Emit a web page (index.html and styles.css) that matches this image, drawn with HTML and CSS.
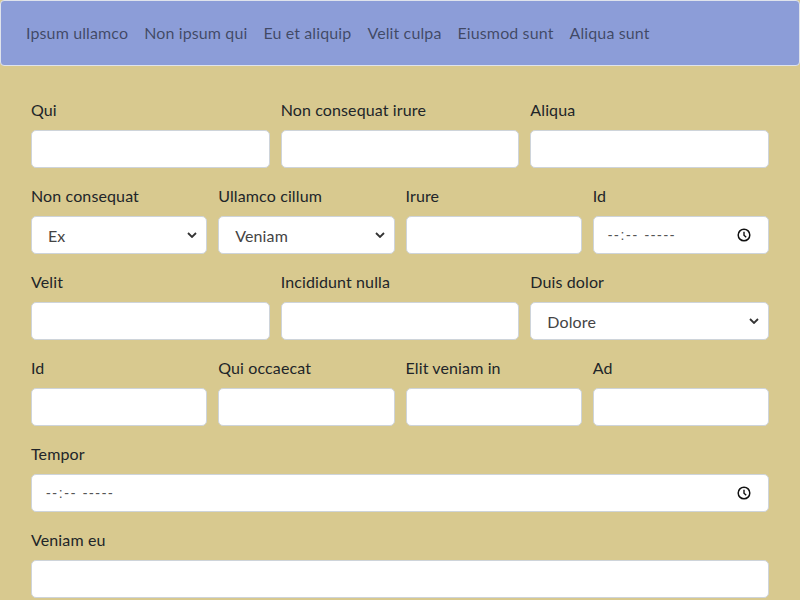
FILE: index.html
```html
<!DOCTYPE html>
<html>
<head>
<meta charset="utf-8">
<link rel="stylesheet" href="styles.css">
</head>
<body>
<nav class="navbar">
  <a class="nav-link" href="#">Ipsum ullamco</a>
  <a class="nav-link" href="#">Non ipsum qui</a>
  <a class="nav-link" href="#">Eu et aliquip</a>
  <a class="nav-link" href="#">Velit culpa</a>
  <a class="nav-link" href="#">Eiusmod sunt</a>
  <a class="nav-link" href="#">Aliqua sunt</a>
</nav>
<form class="form">
  <div class="row cols-3">
    <div class="field"><label>Qui</label><input class="control" type="text"></div>
    <div class="field"><label>Non consequat irure</label><input class="control" type="text"></div>
    <div class="field"><label>Aliqua</label><input class="control" type="text"></div>
  </div>
  <div class="row cols-4">
    <div class="field"><label>Non consequat</label>
      <div class="select-wrap"><select class="control select"><option>Ex</option></select>
      <svg class="chev" width="10" height="6" viewBox="0 0 10 6"><path d="M1 1l4 4 4-4" fill="none" stroke="#333" stroke-width="1.8"/></svg></div>
    </div>
    <div class="field"><label>Ullamco cillum</label>
      <div class="select-wrap"><select class="control select"><option>Veniam</option></select>
      <svg class="chev" width="10" height="6" viewBox="0 0 10 6"><path d="M1 1l4 4 4-4" fill="none" stroke="#333" stroke-width="1.8"/></svg></div>
    </div>
    <div class="field"><label>Irure</label><input class="control" type="text"></div>
    <div class="field"><label>Id</label>
      <div class="control time"><span class="time-text">--:-- -----</span>
      <svg class="clock" width="14" height="14" viewBox="0 0 14 14"><circle cx="7" cy="7" r="5.8" fill="none" stroke="#111" stroke-width="1.5"/><path d="M7 3.8V7.2l2.2 2" fill="none" stroke="#111" stroke-width="1.4"/></svg></div>
    </div>
  </div>
  <div class="row cols-3">
    <div class="field"><label>Velit</label><input class="control" type="text"></div>
    <div class="field"><label>Incididunt nulla</label><input class="control" type="text"></div>
    <div class="field"><label>Duis dolor</label>
      <div class="select-wrap"><select class="control select"><option>Dolore</option></select>
      <svg class="chev" width="10" height="6" viewBox="0 0 10 6"><path d="M1 1l4 4 4-4" fill="none" stroke="#333" stroke-width="1.8"/></svg></div>
    </div>
  </div>
  <div class="row cols-4">
    <div class="field"><label>Id</label><input class="control" type="text"></div>
    <div class="field"><label>Qui occaecat</label><input class="control" type="text"></div>
    <div class="field"><label>Elit veniam in</label><input class="control" type="text"></div>
    <div class="field"><label>Ad</label><input class="control" type="text"></div>
  </div>
  <div class="row cols-1">
    <div class="field"><label>Tempor</label>
      <div class="control time"><span class="time-text">--:-- -----</span>
      <svg class="clock" width="14" height="14" viewBox="0 0 14 14"><circle cx="7" cy="7" r="5.8" fill="none" stroke="#111" stroke-width="1.5"/><path d="M7 3.8V7.2l2.2 2" fill="none" stroke="#111" stroke-width="1.4"/></svg></div>
    </div>
  </div>
  <div class="row cols-1">
    <div class="field"><label>Veniam eu</label><input class="control" type="text"></div>
  </div>
</form>
</body>
</html>
```
FILE: styles.css
```css
* { box-sizing: border-box; }
html, body { margin: 0; padding: 0; }
body {
  background: #d8c98f;
  font-family: Lato, "Liberation Sans", sans-serif;
  font-size: 16px;
  line-height: 24px;
  color: #212529;
  letter-spacing: 0.12px;
  overflow: hidden;
}
.navbar {
  display: flex;
  align-items: center;
  height: 66px;
  padding: 0 9px 0 17px;
  background: #8c9dd8;
  border: 1px solid #dfe3ec;
  border-radius: 4px;
}
.nav-link {
  padding: 8px 8px;
  color: rgba(0, 0, 0, 0.55);
  text-decoration: none;
  font-size: 16px;
}
.form {
  padding: 32px 31px 0 31px;
}
.row {
  display: grid;
  column-gap: 11px;
  margin-bottom: 16px;
}
.cols-3 { grid-template-columns: repeat(3, 1fr); }
.cols-4 { grid-template-columns: repeat(4, 1fr); }
.cols-1 { grid-template-columns: 1fr; }
.field { display: flex; flex-direction: column; min-width: 0; }
.field label {
  display: block;
  margin-bottom: 8px;
  height: 24px;
}
.control {
  display: block;
  width: 100%;
  height: 38px;
  padding: 6px 12px;
  font-family: inherit;
  font-size: 16px;
  letter-spacing: inherit;
  color: #212529;
  background: #fff;
  border: 1px solid #ced4da;
  border-radius: 5px;
  outline: none;
}
.select-wrap { position: relative; }
.select {
  appearance: none;
  -webkit-appearance: none;
  padding-left: 16px;
  color: #444;
}
.chev {
  position: absolute;
  right: 10px;
  top: 16px;
  pointer-events: none;
}
.time {
  display: flex;
  align-items: center;
  justify-content: space-between;
  padding: 0 17px 0 14px;
}
.time-text {
  font-family: "Liberation Sans", sans-serif;
  font-size: 14px;
  color: #555;
  letter-spacing: 1.7px;
  white-space: pre;
}
.clock { flex: none; }
```
